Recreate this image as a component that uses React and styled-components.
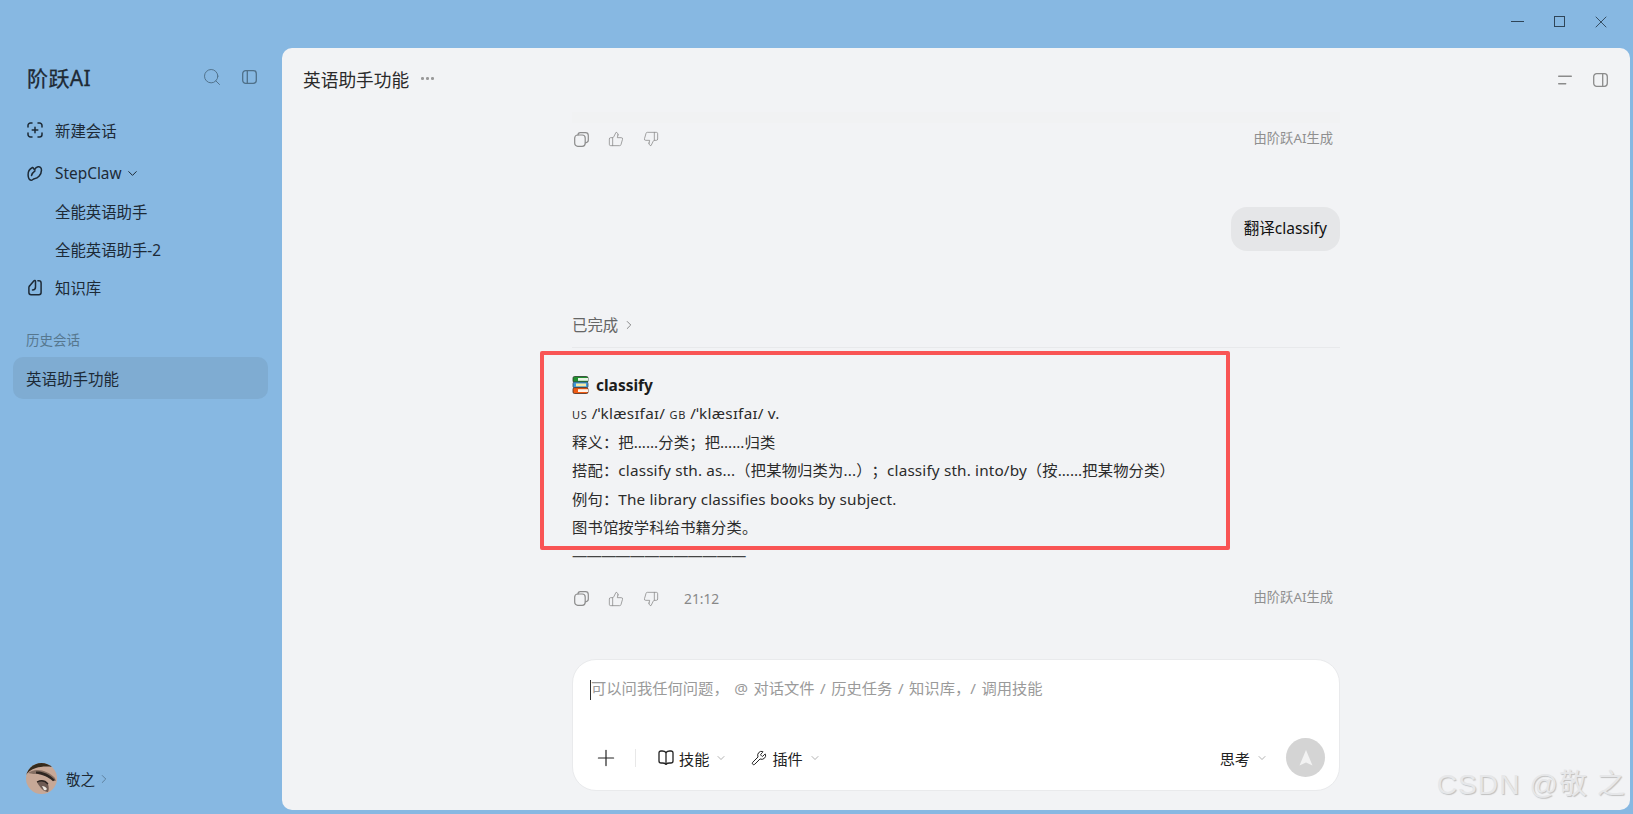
import styled, { createGlobalStyle } from 'styled-components';
import { ChevronDown, ChevronRight, Plus, Search, ThumbsDown, ThumbsUp, Wrench, X } from 'lucide-react';

const GlobalStyle = createGlobalStyle`
    html, body {
        margin: 0;
        padding: 0;
        height: 100%;
        overflow: hidden;
    }
    body {
        font-family: "Noto Sans", "Noto Sans CJK SC", sans-serif;
        font-size: 15.4px;
        color: #222;
    }
    * {
        box-sizing: border-box;
    }
`

const Shell = styled.div`
    width: 100%;
    height: 100vh;
    display: flex;
    flex-direction: column;
    background: #87b8e2;
`

const WindowBar = styled.div`
    height: 48px;
    flex: none;
    display: flex;
    justify-content: flex-end;
    align-items: center;
    gap: 30px;
    padding: 0 26px 5px 0;
    color: #2f4558;
`

const WindowButton = styled.div`
    width: 12px;
    height: 12px;
    display: flex;
    align-items: center;
    justify-content: center;
    flex: none;
`

const CloseIcon = styled(X)`
    flex: none;
`

const MinLine = styled.div`
    width: 13px;
    height: 1.3px;
    flex: none;
    background: #2f4558;
`

const MaxBox = styled.div`
    width: 11px;
    height: 11px;
    flex: none;
    border: 1.2px solid #2f4558;
`

const Body = styled.div`
    flex: 1;
    min-height: 0;
    display: flex;
`

const Sidebar = styled.aside`
    width: 282px;
    flex: none;
    display: flex;
    flex-direction: column;
    padding: 0 14px 20px 13px;
    color: #1d2a36;
`

const BrandRow = styled.div`
    height: 60px;
    display: flex;
    align-items: center;
    padding: 0 11px 2px 14px;
`

const Brand = styled.div`
    font-size: 21px;
    font-weight: 400;
    -webkit-text-stroke: 0.3px #1e2a35;
    letter-spacing: 0.4px;
    color: #1e2a35;
    flex: 1;
`

const BrandTools = styled.div`
    display: flex;
    align-items: center;
    gap: 20px;
    color: #4f7089;
`

const NavList = styled.nav`
    display: flex;
    flex-direction: column;
    margin-top: 3px;
`

const NavItem = styled.div`
    height: 38px;
    flex: none;
    display: flex;
    align-items: center;
    gap: 12px;
    margin-top: ${(p) => (p.$spaced ? '5px' : '0')};
    padding-left: ${(p) => (p.$sub ? '42px' : '14px')};
    color: #1d2a36;
`

const NavIcon = styled.span`
    width: 16px;
    height: 16px;
    flex: none;
    display: flex;
    color: #1d2a36;
`

const Caret = styled(ChevronDown)`
    margin-left: -9px;
    color: #1d2a36;
`

const SectionTitle = styled.div`
    margin-top: 24px;
    padding-left: 13px;
    font-size: 13.5px;
    line-height: 20px;
    color: #56778f;
`

const HistoryItem = styled.div`
    margin-top: 7px;
    height: 42px;
    display: flex;
    align-items: center;
    padding-left: 13px;
    border-radius: 10px;
    font-size: 15.5px;
    background: ${(p) => (p.$active ? '#7facd2' : 'transparent')};
`

const UserRow = styled.div`
    margin-top: auto;
    display: flex;
    align-items: center;
    padding-left: 13px;
    font-size: 14.5px;
`

const UserName = styled.span`
    margin-left: 9px;
`

const UserCaret = styled(ChevronRight)`
    margin-left: 2px;
    color: #54758f;
`

const Panel = styled.main`
    position: relative;
    flex: 1;
    min-width: 0;
    margin: 0 3px 4px 0;
    display: flex;
    flex-direction: column;
    border-radius: 10px;
    background: #f2f3f5;
`

const PanelHeader = styled.header`
    height: 64px;
    flex: none;
    display: flex;
    align-items: center;
    padding: 0 22px 3px 21px;
`

const PanelTitle = styled.h1`
    margin: 0;
    font-size: 17.7px;
    font-weight: 400;
    color: #2a2a2a;
`

const More = styled.span`
    margin-left: 12px;
    display: flex;
    gap: 2.5px;
`

const Dot = styled.i`
    width: 2.6px;
    height: 2.6px;
    border-radius: 50%;
    background: #999;
`

const HeaderTools = styled.div`
    margin-left: auto;
    display: flex;
    align-items: center;
    gap: 21px;
    padding-top: 3px;
    color: #8b8b8b;
`

const Conversation = styled.section`
    width: 768px;
    flex: 1;
    min-height: 0;
    margin: 0 auto;
    display: flex;
    flex-direction: column;
`

const TopFade = styled.div`
    height: 11px;
    flex: none;
    margin-bottom: -11px;
    background: #f1f2f3;
`

const ActionRow = styled.div`
    height: 24px;
    flex: none;
    margin-top: 15px;
    display: flex;
    align-items: center;
    color: #8c8c8c;
    padding-left: 2px;
`

const ActionIcons = styled.div`
    display: flex;
    align-items: center;
    gap: 19px;
`

const Time = styled.span`
    margin-left: 25px;
    font-size: 13.8px;
    color: #888;
`

const Credit = styled.span`
    margin-left: auto;
    padding: 0 7px 4px 0;
    font-size: 13.3px;
    color: #8f8f8f;
`

const Bubble = styled.div`
    align-self: flex-end;
    height: 44px;
    margin-top: 56px;
    padding: 0 13px 4px;
    display: flex;
    align-items: center;
    border-radius: 16px;
    font-size: 15.5px;
    color: #111;
    background: #e5e6e8;
`

const ThoughtRow = styled.div`
    height: 24px;
    margin-top: 63px;
    padding-bottom: 3px;
    display: flex;
    align-items: center;
    gap: 4px;
    color: #666;
`

const Divider = styled.div`
    height: 1px;
    flex: none;
    margin-top: 9px;
    background: #e8e9eb;
`

const Answer = styled.div`
    position: relative;
    padding: 23px 0 2px;
    font-size: 15.3px;
    letter-spacing: 0.15px;
    text-spacing-trim: space-all;
    color: #2b2b2b;
`

const Line = styled.div`
    height: 28.4px;
    line-height: 28.4px;
    white-space: nowrap;
`

const WordLine = styled(Line)`
    display: flex;
    align-items: center;
    gap: 7px;
    font-size: 15.5px;
    font-weight: 700;
    letter-spacing: 0;
    color: #1c1c1c;
`

const SmallCaps = styled.span`
    font-size: 11px;
    letter-spacing: 0.8px;
`

const Ipa = styled.span`
    letter-spacing: 0.3px;
`

const Rule = styled(Line)`
    color: #444;
    letter-spacing: -0.85px;
`

const Highlight = styled.div`
    position: absolute;
    top: 3px;
    left: -32px;
    width: 690px;
    height: 199px;
    border: 4px solid #f95454;
    border-radius: 2px;
    pointer-events: none;
`

const Composer = styled.div`
    width: 768px;
    height: 132px;
    flex: none;
    margin: 0 auto 19px;
    padding: 20px 14px 13px 17px;
    display: flex;
    flex-direction: column;
    border: 1px solid #e9eaec;
    border-radius: 24px;
    background: #fff;
`

const Placeholder = styled.div`
    height: 20px;
    line-height: 17px;
    font-size: 15.3px;
    word-spacing: 1.5px;
    color: #9a9a9a;
    border-left: 1px solid #333;
    white-space: nowrap;
`

const Toolbar = styled.div`
    margin-top: auto;
    display: flex;
    align-items: center;
    font-size: 15.2px;
    color: #222;
`

const AddButton = styled.div`
    margin-left: 3px;
    display: flex;
    color: #222;
`

const ToolSep = styled.div`
    width: 1px;
    height: 18px;
    margin: 0 22px 0 16px;
    background: #e8e8e8;
`

const ToolButton = styled.div`
    display: flex;
    align-items: center;
    gap: 5px;
    margin-right: ${(p) => p.$gap || 0}px;
    margin-left: ${(p) => (p.$end ? 'auto' : '0')};
`

const ToolCaret = styled(ChevronDown)`
    margin-left: 1px;
    color: #888;
`

const SendButton = styled.div`
    width: 39px;
    height: 39px;
    margin-left: 18px;
    display: flex;
    align-items: center;
    justify-content: center;
    border-radius: 50%;
    background: #d4d4d4;
    color: #f2f2f2;
`

const Watermark = styled.div`
    position: absolute;
    right: 4px;
    bottom: 8px;
    font-family: "Liberation Sans", "Noto Sans CJK SC", sans-serif;
    font-size: 28px;
    letter-spacing: 1.1px;
    white-space: nowrap;
    color: #e6e7e9;
    text-shadow: 1px 1px 1px #c0c0c0;
    pointer-events: none;
`

const stroke = {
    fill: 'none',
    stroke: 'currentColor',
    strokeLinecap: 'round',
    strokeLinejoin: 'round',
}

const NewChatIcon = () => (
    <svg width="16" height="16" viewBox="0 0 16 16" {...stroke} strokeWidth="1.5">
        <path d="M1 5V3.500A2.500 2.500 0 0 1 3.500 1H5" />
        <path d="M11 1h1.500A2.500 2.500 0 0 1 15 3.500V5" />
        <path d="M15 11v1.500a2.500 2.500 0 0 1-2.500 2.500H11" />
        <path d="M5 15H3.500A2.500 2.500 0 0 1 1 12.500V11" />
        <path d="M8 5.200v5.600M5.200 8h5.600" />
    </svg>
)

const ClawIcon = () => (
    <svg width="17" height="17" viewBox="0 0 16 16" {...stroke} strokeWidth="1.5">
        <path d="M5.500 2C3 3.200.9 6 1.100 9.500c.1 2.700 1.300 5 3 5.200 1.500.2 1.800-1.300 3.300-1.500 3.600-.5 6.900-3.800 7.100-8.600.1-2.200-1.400-3.800-3.500-3.400-1.700.3-2.700 1.600-3.500 3.100C7 3.400 6.800 2.500 5.500 2z" />
        <path d="M4.500 10C5 8 6 6.600 8 5.300" />
    </svg>
)

const KnowledgeIcon = () => (
    <svg width="16" height="17" viewBox="0 0 16 17" {...stroke} strokeWidth="1.5">
        <path d="M2.500 7 7 1.800c.5-.6 1.500-.3 1.500.5V8c0 1.800-1.300 3-3 3" />
        <path d="M2.500 7c-.4.400-.6 1-.6 1.600V13.500c0 1.300.9 2.200 2.200 2.200h7.800c1.300 0 2.200-.9 2.200-2.200V4c0-1.300-.9-2.200-2.200-2.200h-1" />
    </svg>
)

const SidePanelIcon = ({ right }) => (
    <svg width="15" height="14" viewBox="0 0 15 14" {...stroke} strokeWidth="1.3">
        <rect x="0.700" y="0.700" width="13.600" height="12.600" rx="3" />
        <path d={right ? 'M9.700 1v12' : 'M5.300 1v12'} />
    </svg>
)

const OutlineIcon = () => (
    <svg width="14" height="10" viewBox="0 0 14 10" {...stroke} strokeWidth="1.400">
        <path d="M.7 1.200h12.600M.7 8.800h7" />
    </svg>
)

const CopyIcon = () => (
    <svg width="15" height="15" viewBox="0 0 15 15" {...stroke} strokeWidth="1.200">
        <rect x="0.700" y="3" width="10.500" height="11.300" rx="3" />
        <path d="M4 3c0-1.400 1-2.300 2.300-2.300h5.200c1.600 0 2.800 1.100 2.800 2.800v4.800c0 1.300-1 2.300-3 2.700" />
    </svg>
)

const BookIcon = () => (
    <svg width="16" height="15" viewBox="0 0 16 15" {...stroke} strokeWidth="1.300">
        <path d="M8 2.500C7 1.400 5.800 1 4.300 1H3C1.800 1 1 1.800 1 3v8c0 1.200.8 2 2 2h1.300c1.500 0 2.700.4 3.700 1.300.9-.9 2.200-1.300 3.700-1.300H13c1.200 0 2-.8 2-2V3c0-1.200-.8-2-2-2h-1.300C10.200 1 9 1.400 8 2.500z" />
        <path d="M8 2.500v11.800" />
    </svg>
)

const SendArrow = () => (
    <svg width="16" height="18" viewBox="0 0 16 18" fill="currentColor">
        <path d="M8 1 14.500 16.500 8 13.500 1.500 16.500z" />
    </svg>
)

const BooksEmoji = () => (
    <svg width="17" height="18" viewBox="0 0 17 18">
        <rect x="1" y="0.500" width="15" height="5.800" rx="1.500" fill="#1f8f2e" stroke="#2a3a2a" strokeWidth="0.800" />
        <rect x="6" y="2" width="10" height="2.800" fill="#e9f3e6" />
        <rect x="1" y="6" width="15" height="5.800" rx="1.500" fill="#3d9ad9" stroke="#36475a" strokeWidth="0.800" />
        <rect x="4" y="7.500" width="10" height="2.800" fill="#f6e9a8" />
        <rect x="1" y="11.700" width="15" height="5.800" rx="1.500" fill="#ef5a12" stroke="#4c2a1a" strokeWidth="0.800" />
        <rect x="6" y="13.200" width="10" height="2.800" fill="#fff1e6" />
    </svg>
)

const Avatar = () => (
    <svg width="31" height="31" viewBox="0 0 31 31">
        <defs>
            <clipPath id="avatarClip">
                <circle cx="15.500" cy="15.500" r="15.500" />
            </clipPath>
            <filter id="avatarSoft" x="-10%" y="-10%" width="120%" height="120%">
                <feGaussianBlur stdDeviation="0.700" />
            </filter>
        </defs>
        <g clipPath="url(#avatarClip)">
            <rect width="31" height="31" fill="#c7a897" />
            <g filter="url(#avatarSoft)">
                <path d="M-1-1h33v6C24 3 16 3 10 5 5 6.500 2 9-1 13z" fill="#35291f" />
                <path d="M2 10c3-2 6-3 9-3 7 0 13 3 18 8l1 3-4-1c-4-4-9-6-14-6-3 0-6 0-10-1z" fill="#5a4a40" opacity="0.600" />
                <path d="M10 8.500c6-.5 13 2 19 8.500l-2 1.200c-5-4.700-11-6.700-17-7.700z" fill="#2f2622" />
                <path d="M11 19c4-2 8-1.500 11 2 1 3 1 6 0 8-4 0-8-4-11-10z" fill="#6e5a52" />
                <path d="M16 23c2 0 4 1 5 3-1 1.500-2 1.500-3 1z" fill="#efe9e3" />
                <path d="M11 19c4-2 8-1.500 11 2" fill="none" stroke="#2c2420" strokeWidth="1.300" />
            </g>
        </g>
    </svg>
)

const Actions = ({ time }) => (
    <ActionRow>
        <ActionIcons>
            <CopyIcon />
            <ThumbsUp size={16} strokeWidth={1.2} />
            <ThumbsDown size={16} strokeWidth={1.2} />
        </ActionIcons>
        {time && <Time>{time}</Time>}
        <Credit>由阶跃AI生成</Credit>
    </ActionRow>
)

const App = () => {
    return (
        <Shell>
            <GlobalStyle />
            <WindowBar>
                <WindowButton><MinLine /></WindowButton>
                <WindowButton><MaxBox /></WindowButton>
                <WindowButton><CloseIcon size={20} strokeWidth={1.1} /></WindowButton>
            </WindowBar>
            <Body>
                <Sidebar>
                    <BrandRow>
                        <Brand>阶跃AI</Brand>
                        <BrandTools>
                            <Search size={20} strokeWidth={1.15} />
                            <SidePanelIcon />
                        </BrandTools>
                    </BrandRow>
                    <NavList>
                        <NavItem><NavIcon><NewChatIcon /></NavIcon>新建会话</NavItem>
                        <NavItem $spaced>
                            <NavIcon><ClawIcon /></NavIcon>
                            StepClaw
                            <Caret size={15} strokeWidth={1.6} />
                        </NavItem>
                        <NavItem $sub>全能英语助手</NavItem>
                        <NavItem $sub>全能英语助手-2</NavItem>
                        <NavItem><NavIcon><KnowledgeIcon /></NavIcon>知识库</NavItem>
                    </NavList>
                    <SectionTitle>历史会话</SectionTitle>
                    <HistoryItem $active>英语助手功能</HistoryItem>
                    <UserRow>
                        <Avatar />
                        <UserName>敬之</UserName>
                        <UserCaret size={14} strokeWidth={1.4} />
                    </UserRow>
                </Sidebar>
                <Panel>
                    <PanelHeader>
                        <PanelTitle>英语助手功能</PanelTitle>
                        <More><Dot /><Dot /><Dot /></More>
                        <HeaderTools>
                            <OutlineIcon />
                            <SidePanelIcon right />
                        </HeaderTools>
                    </PanelHeader>
                    <Conversation>
                        <TopFade />
                        <Actions />
                        <Bubble>翻译classify</Bubble>
                        <ThoughtRow>
                            已完成
                            <ChevronRight size={14} strokeWidth={1.3} />
                        </ThoughtRow>
                        <Divider />
                        <Answer>
                            <WordLine><BooksEmoji />classify</WordLine>
                            <Line><SmallCaps>US</SmallCaps> <Ipa>/ˈklæsɪfaɪ/</Ipa> <SmallCaps>GB</SmallCaps> <Ipa>/ˈklæsɪfaɪ/</Ipa> v.</Line>
                            <Line>释义：把……分类；把……归类</Line>
                            <Line>搭配：classify sth. as...（把某物归类为...）；classify sth. into/by（按……把某物分类）</Line>
                            <Line>例句：The library classifies books by subject.</Line>
                            <Line>图书馆按学科给书籍分类。</Line>
                            <Rule>————————————</Rule>
                            <Highlight />
                        </Answer>
                        <Actions time="21:12" />
                    </Conversation>
                    <Composer>
                        <Placeholder>可以问我任何问题， @ 对话文件 / 历史任务 / 知识库，/ 调用技能</Placeholder>
                        <Toolbar>
                            <AddButton><Plus size={26} strokeWidth={1.1} /></AddButton>
                            <ToolSep />
                            <ToolButton $gap={24}>
                                <BookIcon />
                                技能
                                <ToolCaret size={12} strokeWidth={1.3} />
                            </ToolButton>
                            <ToolButton>
                                <Wrench size={16} strokeWidth={1.5} />
                                插件
                                <ToolCaret size={12} strokeWidth={1.3} />
                            </ToolButton>
                            <ToolButton $end>
                                思考
                                <ToolCaret size={12} strokeWidth={1.3} />
                            </ToolButton>
                            <SendButton><SendArrow /></SendButton>
                        </Toolbar>
                    </Composer>
                    <Watermark>CSDN @敬 之</Watermark>
                </Panel>
            </Body>
        </Shell>
    )
}

export default App;
